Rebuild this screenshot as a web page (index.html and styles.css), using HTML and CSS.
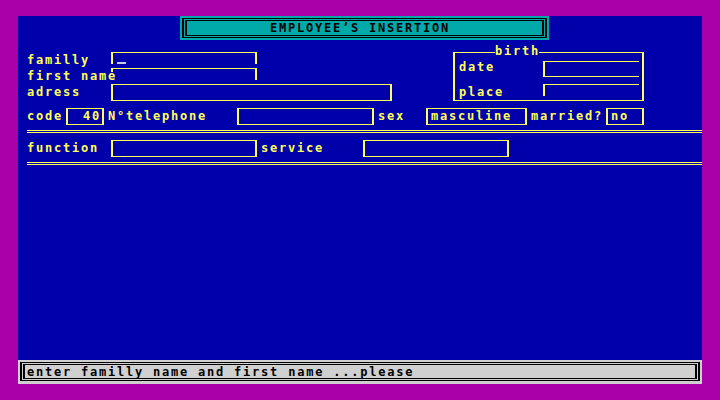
FILE: index.html
```html
<!DOCTYPE html>
<html>
<head>
<meta charset="utf-8">
<title>Employee's insertion</title>
<link rel="stylesheet" href="styles.css">
</head>
<body>
<div class="screen">
  <div class="panel">
    <div class="title"><div class="title-outer"><div class="title-inner">EMPLOYEE’S INSERTION</div></div></div>

    <div class="upper">
      <div class="idcol">
        <div class="row r16">
          <span class="lbl">familly</span>
          <span class="field f-familly"><span class="cursor"></span></span>
        </div>
        <div class="row r16">
          <span class="lbl">first name</span>
          <span class="field f-first"></span>
        </div>
        <div class="row r17">
          <span class="lbl">adress</span>
          <span class="field f-adress"></span>
        </div>
      </div>

      <div class="birth">
        <span class="birth-title">birth</span>
        <div class="brow b-date">
          <span class="lbl lbl-date">date</span>
          <span class="field f-date"></span>
        </div>
        <div class="brow b-place">
          <span class="lbl">place</span>
          <span class="field f-place"></span>
        </div>
      </div>
    </div>

    <div class="line-row">
      <span class="lbl w-code">code</span>
      <span class="box w-codebox right">40</span>
      <span class="lbl w-tel gap">N°telephone</span>
      <span class="box w-telbox"></span>
      <span class="lbl w-sex gap">sex</span>
      <span class="box w-sexbox">masculine</span>
      <span class="lbl w-married gap">married?</span>
      <span class="box w-nobox">no</span>
    </div>

    <div class="dbl"></div>

    <div class="line-row">
      <span class="lbl w-func">function</span>
      <span class="box w-funcbox"></span>
      <span class="lbl w-service gap">service</span>
      <span class="box w-servbox"></span>
    </div>

    <div class="dbl"></div>
  </div>

  <div class="status"><div class="status-outer"><div class="status-inner">enter familly name and first name ...please</div></div></div>
</div>
</body>
</html>
```

FILE: styles.css
```css
* { box-sizing: border-box; }
html, body { margin: 0; padding: 0; }

body {
  width: 720px;
  height: 400px;
  overflow: hidden;
  background: #aa00aa;
  font-family: "DejaVu Sans Mono", "Liberation Mono", monospace;
  font-weight: bold;
  font-size: 12px;
  letter-spacing: 1.78px;
  color: #ffff55;
}

.screen { padding: 16px 18px 0 18px; }

.panel {
  height: 344px;
  background: #0000aa;
  display: flex;
  flex-direction: column;
}

/* title */
.title {
  margin-left: 162px;
  width: 369px;
  height: 24px;
  background: #00aaaa;
  padding: 2px;
}
.title-outer {
  height: 20px;
  border: solid #000;
  border-width: 1px 2px;
  padding: 1px;
}
.title-inner {
  height: 16px;
  border: solid #000;
  border-width: 1px 2px;
  color: #000;
  line-height: 14px;
  padding-left: 83px;
  white-space: nowrap;
}

/* generic */
.lbl { white-space: nowrap; display: block; }
.field { display: block; border: 0 solid #ffff55; }

/* upper section */
.upper {
  display: flex;
  align-items: flex-start;
  padding-left: 9px;
  margin-top: 12px;
}
.idcol { width: 365px; display: flex; flex-direction: column; }
.row { display: grid; grid-template-columns: 84px auto; align-items: start; }
.r16 { height: 16px; }
.r17 { height: 17px; }
.row .lbl { line-height: 16px; position: relative; z-index: 1; }

.f-familly { width: 146px; height: 12px; border-width: 1px 2px 0 2px; position: relative; }
.f-first {
  width: 146px; height: 12px; border-width: 1px 2px 0 0;
  background: linear-gradient(#ffff55, #ffff55) 0 0 / 2px 3px no-repeat;
}
.f-adress { width: 281px; height: 17px; border-width: 1px 2px; }

.cursor {
  position: absolute;
  left: 4px;
  top: 9px;
  width: 9px;
  height: 2px;
  background: #c8c8ee;
}

/* birth group */
.birth {
  margin-left: 61px;
  width: 191px;
  height: 49px;
  border: solid #ffff55;
  border-width: 1px 2px;
  padding: 8px 0 0 4px;
  position: relative;
}
.birth-title {
  position: absolute;
  left: 40px;
  top: -8px;
  width: 44px;
  line-height: 13px;
  background: #0000aa;
}
.brow { display: grid; grid-template-columns: 84px 96px; align-items: start; }
.b-date { height: 16px; }
.b-place { height: 16px; margin-top: 7px; }
.lbl-date { line-height: 13px; }
.b-place .lbl { line-height: 16px; }
.f-date { height: 16px; border-width: 1px 0 1px 2px; }
.f-place { height: 12px; border-width: 1px 0 0 2px; }

/* single-line rows */
.line-row {
  display: flex;
  align-items: center;
  height: 17px;
  margin-top: 7px;
  padding-left: 9px;
}
.line-row .lbl { line-height: 17px; }
.box {
  display: block;
  height: 17px;
  border: solid #ffff55;
  border-width: 1px 2px;
  line-height: 15px;
  padding-left: 3px;
  white-space: nowrap;
}
.right { text-align: right; padding-left: 0; padding-right: 1px; }
.gap { margin-left: 4px; }

.w-code { width: 39px; }
.w-codebox { width: 38px; }
.w-tel { width: 129px; }
.w-telbox { width: 137px; }
.w-sex { width: 48px; }
.w-sexbox { width: 101px; }
.w-married { width: 75px; }
.w-nobox { width: 38px; }
.w-func { width: 84px; }
.w-funcbox { width: 146px; }
.w-service { width: 102px; }
.w-servbox { width: 146px; }

.dbl {
  margin: 5px 0 0 9px;
  height: 3px;
  border-top: 1px solid #ffff55;
  border-bottom: 1px solid #ffff55;
}

/* status bar */
.status {
  height: 24px;
  background: #d0d0d0;
  padding: 2px 2px 3px 2px;
}
.status-outer {
  height: 19px;
  border: solid #000;
  border-width: 1px 2px;
  padding: 1px;
}
.status-inner {
  height: 15px;
  border: solid #000;
  border-width: 1px 2px;
  color: #000;
  line-height: 15px;
  padding-left: 2px;
  white-space: nowrap;
}
```
